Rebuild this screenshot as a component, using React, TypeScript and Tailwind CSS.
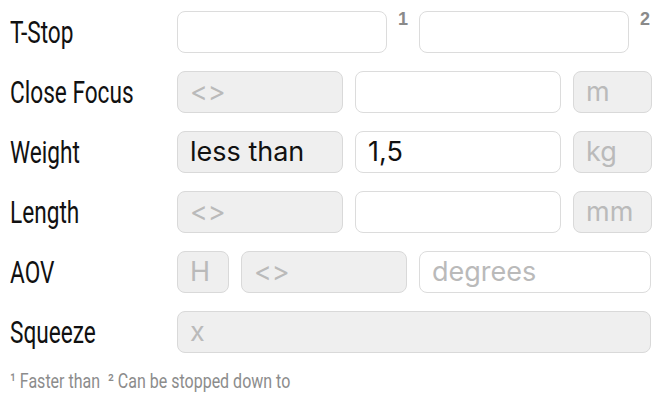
import React from "react";

function Label({ children }: { children: React.ReactNode }) {
  return (
    <div className="w-[167px] shrink-0 text-[31px] leading-none text-[#111111] font-['Roboto','Liberation_Sans',sans-serif]">
      <span className="inline-block origin-left scale-x-[0.73] whitespace-nowrap">{children}</span>
    </div>
  );
}

function Box({
  w,
  gray,
  text,
  placeholder,
}: {
  w: string;
  gray?: boolean;
  text?: string;
  placeholder?: string;
}) {
  return (
    <div
      className={`${w} h-[42px] shrink-0 rounded-[8px] border flex items-center px-3 text-[27px] font-['Inter',sans-serif] ${
        gray ? "bg-[#efefef] border-[#d9d9d9]" : "bg-white border-[#dcdcdc]"
      }`}
    >
      {text ? (
        <span className="text-[#111111]">{text}</span>
      ) : placeholder ? (
        <span className="text-[#bababa]">{placeholder}</span>
      ) : null}
    </div>
  );
}

function Sup({ n }: { n: string }) {
  return (
    <div className="w-[32px] shrink-0 self-start -mt-[1px] text-center text-[18px] font-bold leading-none text-[#8a8a8a] font-['Liberation_Sans',sans-serif]">
      {n}
    </div>
  );
}

export default function App() {
  return (
    <div className="w-[660px] h-[400px] bg-white pl-[10px] pt-[11px] overflow-hidden">
      <div className="flex flex-col gap-[18px]">
        <div className="flex items-center h-[42px]">
          <Label>T-Stop</Label>
          <div className="flex items-center">
            <Box w="w-[210px]" />
            <Sup n="1" />
            <Box w="w-[210px]" />
            <Sup n="2" />
          </div>
        </div>
        <div className="flex items-center h-[42px]">
          <Label>Close Focus</Label>
          <div className="flex items-center gap-[12px]">
            <Box w="w-[166px]" gray placeholder="<>" />
            <Box w="w-[206px]" />
            <Box w="w-[79px]" gray placeholder="m" />
          </div>
        </div>
        <div className="flex items-center h-[42px]">
          <Label>Weight</Label>
          <div className="flex items-center gap-[12px]">
            <Box w="w-[166px]" gray text="less than" />
            <Box w="w-[206px]" text="1,5" />
            <Box w="w-[79px]" gray placeholder="kg" />
          </div>
        </div>
        <div className="flex items-center h-[42px]">
          <Label>Length</Label>
          <div className="flex items-center gap-[12px]">
            <Box w="w-[166px]" gray placeholder="<>" />
            <Box w="w-[206px]" />
            <Box w="w-[79px]" gray placeholder="mm" />
          </div>
        </div>
        <div className="flex items-center h-[42px]">
          <Label>AOV</Label>
          <div className="flex items-center gap-[12px]">
            <Box w="w-[52px]" gray placeholder="H" />
            <Box w="w-[166px]" gray placeholder="<>" />
            <Box w="w-[232px]" placeholder="degrees" />
          </div>
        </div>
        <div className="flex items-center h-[42px]">
          <Label>Squeeze</Label>
          <Box w="w-[474px]" gray placeholder="x" />
        </div>
      </div>
      <div className="mt-[18px] text-[20px] leading-none text-[#8c8c8c] font-['Roboto','Liberation_Sans',sans-serif]">
        <span className="inline-block origin-left scale-x-[0.8] whitespace-pre">¹ Faster than  ² Can be stopped down to</span>
      </div>
    </div>
  );
}
